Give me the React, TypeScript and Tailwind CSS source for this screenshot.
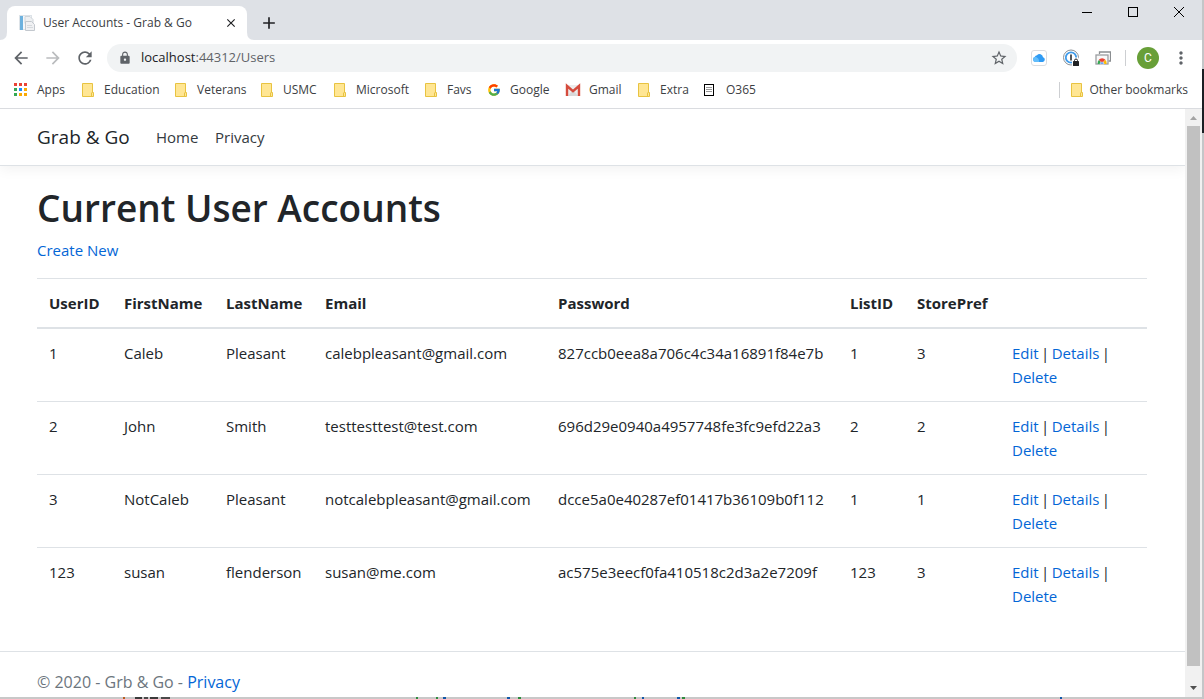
import React from "react";
import {
  MdAdd,
  MdArrowBack,
  MdArrowForward,
  MdClose,
  MdLock,
  MdMoreVert,
  MdRefresh,
  MdStarBorder,
} from "react-icons/md";
import { FcGoogle } from "react-icons/fc";

function FolderIcon() {
  return (
    <svg className="size-4 shrink-0" viewBox="0 0 16 16" aria-hidden="true">
      <path d="M2.500 1.500h10v9h1v4h-11z" fill="#ffe694" stroke="#e8c341" />
      <path d="M11.500 14v-3q0-.5 1-.5" fill="none" stroke="#e8c341" />
    </svg>
  );
}

function AppsIcon() {
  const colors = [
    "#ea4335", "#ea4335", "#ea4335",
    "#34a853", "#1a8cff", "#fbaa04",
    "#34a853", "#fbaa04", "#fbaa04",
  ];
  return (
    <svg width="16" height="16" viewBox="0 0 16 16" aria-hidden="true">
      {colors.map((c, i) => (
        <rect key={i} x={1 + (i % 3) * 5} y={1 + Math.floor(i / 3) * 5} width="3" height="3" fill={c} />
      ))}
    </svg>
  );
}

function GmailIcon() {
  return (
    <svg width="16" height="16" viewBox="0 0 16 16" aria-hidden="true">
      <path d="M2 3h12v11H2z" fill="#ececec" />
      <path d="M3 14l4-5 1 1 1-1 4 5z" fill="#d9d9d9" />
      <path d="M2 14V4l6 5.200L14 4v10" fill="none" stroke="#d54b3d" strokeWidth="2.400" />
    </svg>
  );
}

function DocIcon() {
  return (
    <svg width="16" height="16" viewBox="0 0 16 16" aria-hidden="true">
      <rect x="2.500" y="2.500" width="9" height="11" fill="#fff" stroke="#000" />
      <path d="M4 5.500h6M4 7.500h6M4 9.500h6" stroke="#999" />
    </svg>
  );
}

function PageIcon() {
  return (
    <svg width="16" height="16" viewBox="0 0 16 16" aria-hidden="true">
      <rect x=".5" y=".5" width="12" height="14" fill="#f4f7fa" stroke="#dde3e8" />
      <rect x="1" y="1" width="3" height="14" fill="#6cb1de" />
      <path d="M6 1.500h5l3 3v4H6z" fill="#eef0f2" stroke="#cfd4d9" />
      <path d="M6.500 6.500h6l3 3v6h-9z" fill="#f0f1f3" stroke="#c3c8ce" />
      <path d="M8 10.500h5M8 12.500h6" stroke="#d5d9dd" />
    </svg>
  );
}

function CloudIcon() {
  return (
    <svg width="16" height="16" viewBox="0 0 16 16" aria-hidden="true">
      <rect x=".5" y=".5" width="15" height="15" rx="2.500" fill="#fff" stroke="#dadce0" />
      <path d="M4.200 12a2.700 2.700 0 0 1-.3-5.200A2.200 2.200 0 0 1 6 5.200a3.400 3.400 0 0 1 6 2A2.500 2.500 0 0 1 12 12z" fill="#2f9bf4" />
      <path d="M4.200 12a2.700 2.700 0 0 1-.8-5c3-.6 5 2 4.600 5z" fill="#62bdfb" />
    </svg>
  );
}

function VaultIcon() {
  return (
    <svg width="18" height="18" viewBox="0 0 18 18" aria-hidden="true">
      <circle cx="9" cy="8.500" r="7.500" fill="#fff" stroke="#8a8f94" />
      <circle cx="9" cy="8.500" r="5.200" fill="#fff" stroke="#3f9bea" strokeWidth="1.800" />
      <path d="M9 5.500v6" stroke="#55595d" strokeWidth="2" />
      <path d="M10 18v-7l2-2.500h4l2 2.500v7z" fill="#fff" />
      <rect x="11" y="12" width="6" height="5" rx=".6" fill="#202124" />
      <path d="M12.500 12.500v-1a1.500 1.500 0 0 1 3 0v1" fill="none" stroke="#202124" />
    </svg>
  );
}

function RemoteIcon() {
  return (
    <svg width="16" height="16" viewBox="0 0 16 16" aria-hidden="true">
      <path d="M4.500 4V2h11v9h-2" fill="#fff" stroke="#8b8e91" strokeWidth="1.300" />
      <rect x="1" y="5" width="12" height="9" fill="#f8f8f8" stroke="#9a9da0" strokeWidth="1.300" />
      <path d="M2.700 14a4.500 4.500 0 0 1 1.300-4.200L7 14z" fill="#34a853" />
      <path d="M3.800 9.800a4.300 4.300 0 0 1 6.600 0L7 13z" fill="#ea4335" />
      <path d="M10.300 9.800A4.400 4.400 0 0 1 11.500 14H7z" fill="#fbbc04" />
      <path d="M5 14a2 2 0 0 1 4 0z" fill="#4285f4" stroke="#fff" strokeWidth=".5" />
    </svg>
  );
}

const bookmarks = [
  { label: "Apps", icon: <AppsIcon />, width: "w-[67px]" },
  { label: "Education", icon: <FolderIcon />, width: "w-[93px]" },
  { label: "Veterans", icon: <FolderIcon />, width: "w-[86px]" },
  { label: "USMC", icon: <FolderIcon />, width: "w-[73px]" },
  { label: "Microsoft", icon: <FolderIcon />, width: "w-[91px]" },
  { label: "Favs", icon: <FolderIcon />, width: "w-[63px]" },
  { label: "Google", icon: <FcGoogle size={14} />, width: "w-[79px]" },
  { label: "Gmail", icon: <GmailIcon />, width: "w-[71px]" },
  { label: "Extra", icon: <FolderIcon />, width: "w-[66px]" },
  { label: "O365", icon: <DocIcon />, width: "w-[60px]" },
];

const users = [
  { id: "1", first: "Caleb", last: "Pleasant", email: "calebpleasant@gmail.com", password: "827ccb0eea8a706c4c34a16891f84e7b", list: "1", store: "3" },
  { id: "2", first: "John", last: "Smith", email: "testtesttest@test.com", password: "696d29e0940a4957748fe3fc9efd22a3", list: "2", store: "2" },
  { id: "3", first: "NotCaleb", last: "Pleasant", email: "notcalebpleasant@gmail.com", password: "dcce5a0e40287ef01417b36109b0f112", list: "1", store: "1" },
  { id: "123", first: "susan", last: "flenderson", email: "susan@me.com", password: "ac575e3eecf0fa410518c2d3a2e7209f", list: "123", store: "3" },
];

const columns = [
  { label: "UserID", width: "w-[75px]" },
  { label: "FirstName", width: "w-[102px]" },
  { label: "LastName", width: "w-[99px]" },
  { label: "Email", width: "w-[233px]" },
  { label: "Password", width: "w-[292px]" },
  { label: "ListID", width: "w-[67px]" },
  { label: "StorePref", width: "w-[95px]" },
  { label: "", width: "" },
];

function TabStrip() {
  return (
    <header className="flex h-10 shrink-0 items-start bg-[#dee1e6]">
      <svg className="mt-8 h-2 w-[7px] shrink-0" viewBox="0 0 7 8" aria-hidden="true"><path d="M7 0v8H0q7 0 7-8z" fill="#fff" /></svg>
      <div className="mt-[6px] flex h-[34px] w-[240px] items-center rounded-t-lg bg-white pr-[9px] pl-3 text-xs text-[#3c4043]">
        <PageIcon />
        <span className="ml-2 flex-1 whitespace-nowrap">User Accounts - Grab &amp; Go</span>
        <button aria-label="Close tab"><MdClose size={14} color="#202124" /></button>
      </div>
      <svg className="mt-8 h-2 w-[7px] shrink-0" viewBox="0 0 7 8" aria-hidden="true"><path d="M0 0v8h7q-7 0-7-8z" fill="#fff" /></svg>
      <button aria-label="New tab" className="mt-[13px] ml-[5px]"><MdAdd size={20} color="#202124" /></button>
      <div className="ml-auto flex h-6 items-center">
        <button aria-label="Minimize" className="flex w-[46px] justify-center">
          <svg width="10" height="10" viewBox="0 0 10 10"><path d="M0 5.500h10" stroke="#000" /></svg>
        </button>
        <button aria-label="Maximize" className="flex w-[46px] justify-center">
          <svg width="10" height="10" viewBox="0 0 10 10"><rect x=".5" y=".5" width="9" height="9" fill="none" stroke="#000" /></svg>
        </button>
        <button aria-label="Close" className="flex w-[46px] justify-center">
          <svg width="10" height="10" viewBox="0 0 10 10"><path d="M0 0l10 10M10 0L0 10" stroke="#000" /></svg>
        </button>
      </div>
    </header>
  );
}

function Toolbar() {
  return (
    <div className="flex h-9 shrink-0 items-center bg-white px-[11px]">
      <div className="flex gap-3 text-[#5f6368]">
        <button aria-label="Back"><MdArrowBack size={20} /></button>
        <button aria-label="Forward" className="text-[#babcbe]"><MdArrowForward size={20} /></button>
        <button aria-label="Reload"><MdRefresh size={20} /></button>
      </div>
      <div className="ml-3 flex h-7 flex-1 items-center rounded-full bg-[#f1f3f4] pr-[9px] pl-[11px] text-[#5f6368]">
        <MdLock size={14} />
        <a href="#url" className="ml-[9px] flex-1 text-[13px]"><span className="text-[#202124]">localhost</span>:44312/Users</a>
        <button aria-label="Bookmark this page"><MdStarBorder size={18} /></button>
      </div>
      <div className="ml-[14px] flex items-center gap-4">
        <button aria-label="iCloud"><CloudIcon /></button>
        <button aria-label="Password manager" className="-mx-px"><VaultIcon /></button>
        <button aria-label="Remote desktop"><RemoteIcon /></button>
      </div>
      <div className="ml-[14px] h-4 w-px bg-[#cdcfd2]" />
      <button className="ml-[11px] flex size-[22px] items-center justify-center rounded-full bg-[#689f38] font-[Roboto,sans-serif] text-xs text-white">C</button>
      <button aria-label="Menu" className="ml-3 text-[#5f6368]"><MdMoreVert size={20} /></button>
    </div>
  );
}

function BookmarksBar() {
  return (
    <nav className="flex h-[33px] shrink-0 items-center border-b border-[#dadce0] bg-white pr-[14px] pb-1 pl-[13px] text-xs text-[#3c4043]">
      {bookmarks.map((b) => (
        <a key={b.label} href="#bookmark" className={`flex items-center gap-2 whitespace-nowrap ${b.width}`}>
          <span className="flex w-4 justify-center">{b.icon}</span>
          {b.label}
        </a>
      ))}
      <div className="mr-[9px] ml-auto h-4 w-px bg-[#cdcfd2]" />
      <a href="#bookmark" className="flex items-center gap-1 whitespace-nowrap"><FolderIcon />Other bookmarks</a>
    </nav>
  );
}

function Link({ children }: { children: React.ReactNode }) {
  return <a href="#page" className="text-[#0366d6] hover:underline">{children}</a>;
}

function Separator() {
  return <span className="flex w-[5px] justify-center">|</span>;
}

function UsersTable() {
  return (
    <table className="w-full table-fixed border-t border-[#dee2e6] text-left">
      <thead>
        <tr className="border-b-2 border-[#dee2e6]">
          {columns.map((c) => (
            <th key={c.label} scope="col" className={`p-3 font-bold ${c.width}`}>{c.label}</th>
          ))}
        </tr>
      </thead>
      <tbody>
        {users.map((u) => (
          <tr key={u.id} className="border-t border-[#dee2e6] align-top">
            <td className="p-3">{u.id}</td>
            <td className="p-3">{u.first}</td>
            <td className="p-3">{u.last}</td>
            <td className="p-3">{u.email}</td>
            <td className="p-3">{u.password}</td>
            <td className="p-3">{u.list}</td>
            <td className="p-3">{u.store}</td>
            <td className="p-3">
              <div className="flex flex-wrap gap-x-1">
                <Link>Edit</Link>
                <Separator />
                <Link>Details</Link>
                <Separator />
                <Link>Delete</Link>
              </div>
            </td>
          </tr>
        ))}
      </tbody>
    </table>
  );
}

function ScrollBar() {
  return (
    <div className="flex w-[17px] shrink-0 flex-col items-center bg-[#f1f1f1]">
      <svg className="h-[17px] w-[17px] shrink-0" viewBox="0 0 17 17"><path d="M5 11h7L8.500 7z" fill="#a3a3a3" /></svg>
      <div className="w-[13px] flex-1 bg-[#c1c1c1]" />
      <svg className="mt-[14px] h-[17px] w-[17px] shrink-0" viewBox="0 0 17 17"><path d="M5 6h7L8.500 10z" fill="#505050" /></svg>
    </div>
  );
}

const specks = [
  { x: 123, w: 2, c: "#b85c1e" },
  { x: 135, w: 7, c: "#3a3a3a" },
  { x: 144, w: 4, c: "#4a4a4a" },
  { x: 150, w: 8, c: "#3a3a3a" },
  { x: 161, w: 9, c: "#4a4a4a" },
  { x: 416, w: 2, c: "#2e8b3d" },
  { x: 436, w: 2, c: "#2e8b3d" },
  { x: 443, w: 3, c: "#1157a8" },
  { x: 507, w: 3, c: "#1157a8" },
  { x: 518, w: 3, c: "#2e8b3d" },
  { x: 634, w: 2, c: "#2e8b3d" },
  { x: 642, w: 2, c: "#1157a8" },
  { x: 677, w: 3, c: "#1157a8" },
  { x: 682, w: 3, c: "#2e8b3d" },
  { x: 1060, w: 2, c: "#1157a8" },
];

function WindowEdge() {
  return (
    <svg className="h-[2px] w-full shrink-0 bg-[#c8c8c8]" aria-hidden="true">
      {specks.map((s) => (
        <rect key={s.x} x={s.x} y="0" width={s.w} height="2" fill={s.c} />
      ))}
    </svg>
  );
}

export default function App() {
  return (
    <div className="flex h-screen bg-white font-['Open_Sans','Noto_Sans',sans-serif]">
      <div className="flex min-w-0 flex-1 flex-col">
        <TabStrip />
        <Toolbar />
        <BookmarksBar />
        <div className="flex min-h-0 flex-1">
          <div className="min-w-0 flex-1 overflow-hidden text-[15px] leading-6 text-[#212529]">
            <nav className="flex h-[57px] items-center border-b border-[#dee2e6] px-[37px] shadow-[0_4px_12px_rgba(0,0,0,0.05)]">
              <a href="#home" className="w-[119px] text-[19px]">Grab &amp; Go</a>
              <a href="#home" className="w-[59px] text-[#343a40]">Home</a>
              <a href="#privacy" className="text-[#343a40]">Privacy</a>
            </nav>
            <main className="pt-[18px] pr-[38px] pb-[31px] pl-[37px]">
              <h1 className="mb-[6px] text-[37px] leading-[48px] font-semibold">Current User Accounts</h1>
              <p className="mb-4"><Link>Create New</Link></p>
              <UsersTable />
            </main>
            <footer className="border-t border-[#dee2e6] px-[37px] text-base leading-[60px] text-[#6c757d]">
              © 2020 - Grb &amp; Go - <Link>Privacy</Link>
            </footer>
          </div>
          <ScrollBar />
        </div>
        <WindowEdge />
      </div>
      <div className="flex w-[2px] shrink-0 flex-col bg-[#c4c6c8] pt-[69px]">
        <div className="h-16 bg-[#1b1f24]" />
      </div>
    </div>
  );
}
